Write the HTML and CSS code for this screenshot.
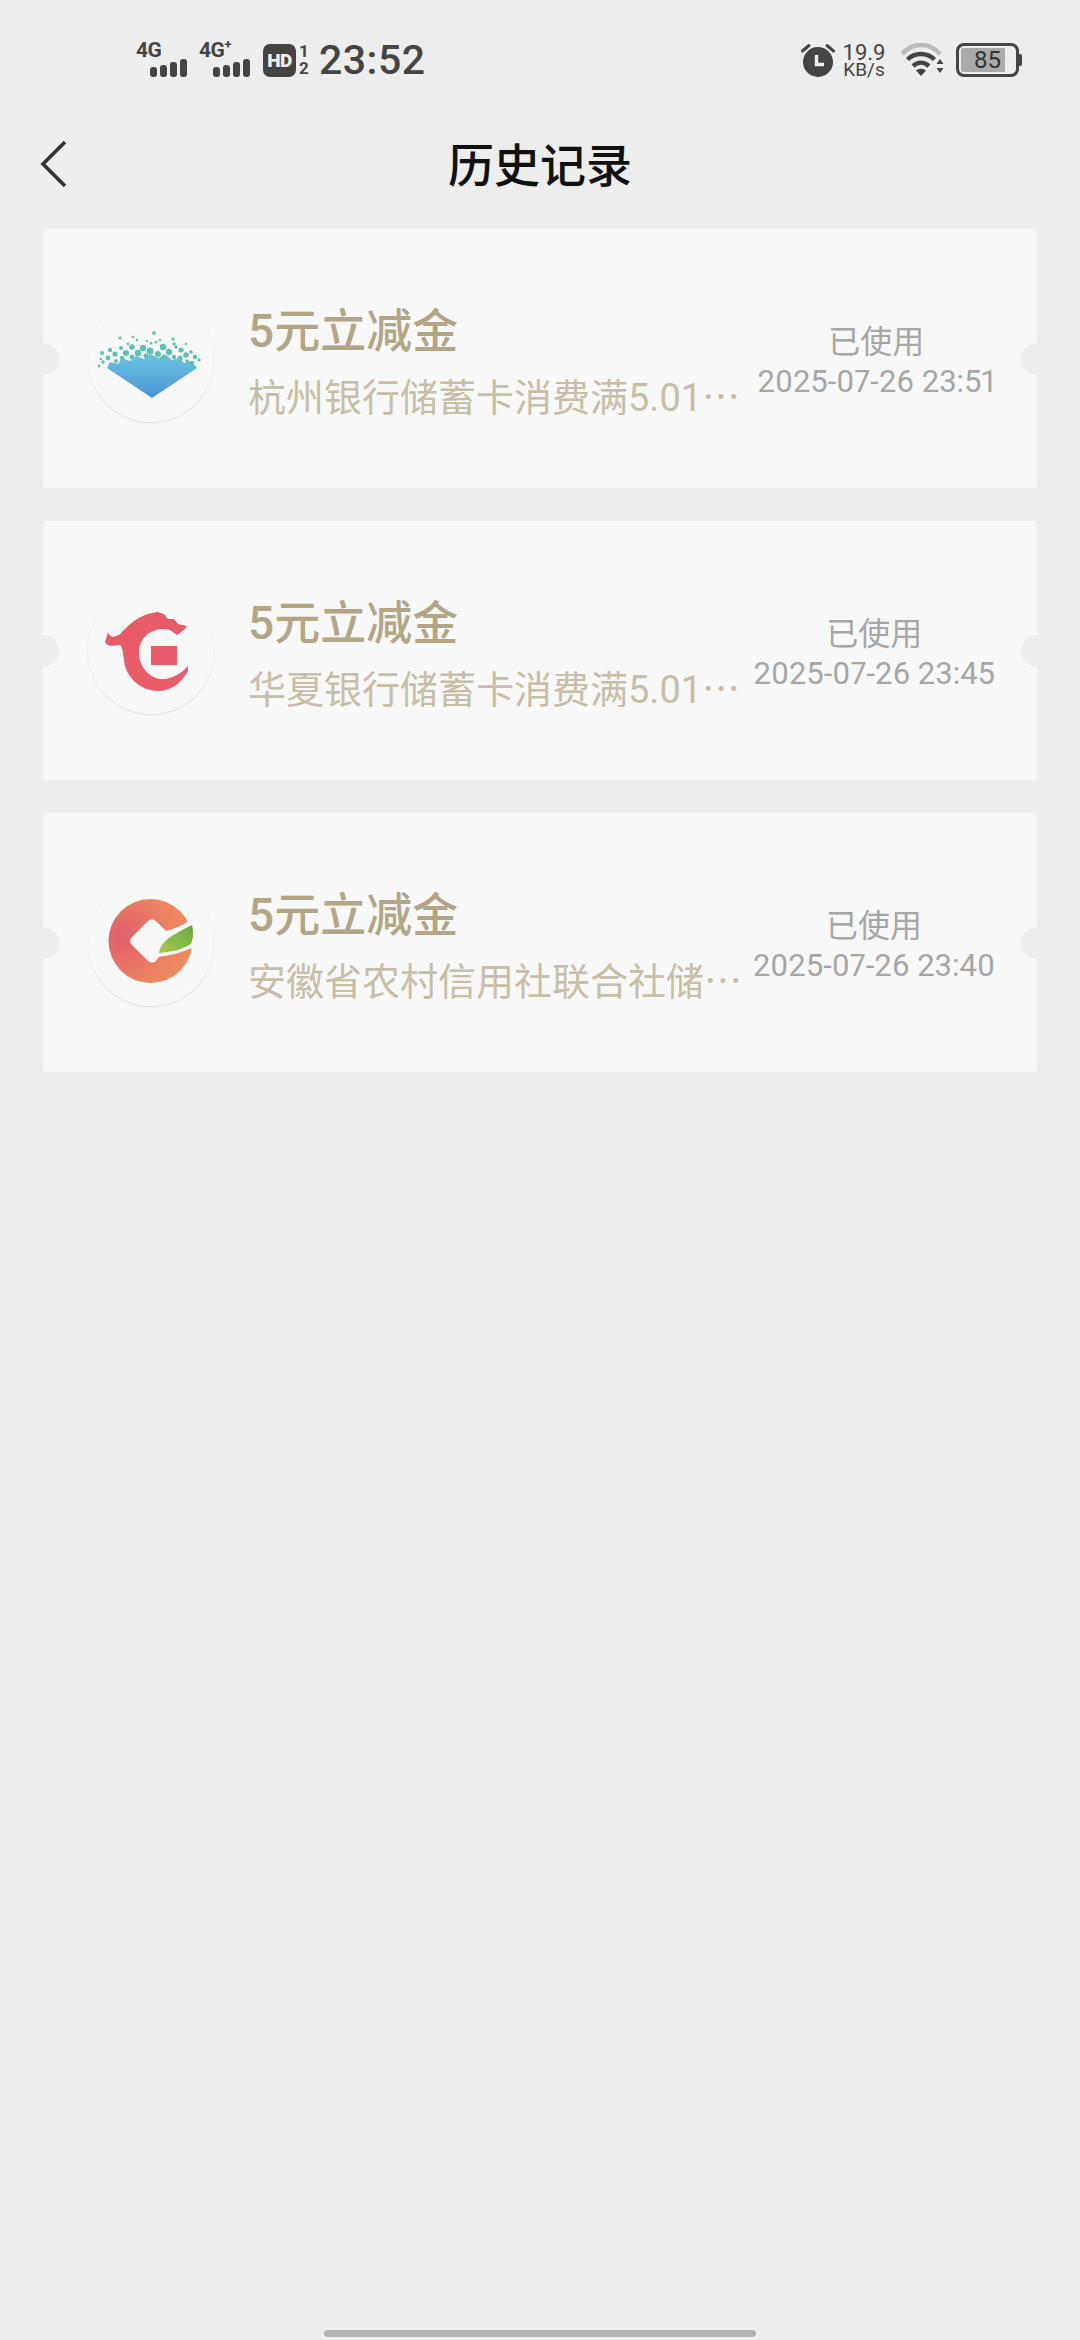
FILE: index.html
```html
<!DOCTYPE html>
<html lang="zh-CN">
<head>
    <meta charset="UTF-8">
    <meta name="viewport" content="width=device-width, initial-scale=1.0">
    <title>历史记录</title>
    <link rel="stylesheet" href="styles.css">
</head>
<body>
    <!-- Status bar -->
    <div class="status-bar">
        <div class="signal">
            <span class="net">4G</span>
            <div class="bars"><i class="b1"></i><i class="b2"></i><i class="b3"></i><i class="b4"></i></div>
        </div>
        <div class="signal">
            <span class="net">4G<sup>+</sup></span>
            <div class="bars"><i class="b1"></i><i class="b2"></i><i class="b3"></i><i class="b4"></i></div>
        </div>
        <span class="hd">HD</span>
        <div class="sim"><span>1</span><span>2</span></div>
        <span class="time">23:52</span>

        <div class="status-right">
            <svg class="alarm" width="34" height="34" viewBox="0 0 34 34">
                <circle cx="17" cy="19" r="15" fill="#444"/>
                <path d="M1.5 8 L8 2.5 M32.5 8 L26 2.5" stroke="#444" stroke-width="3" stroke-linecap="round"/>
                <path d="M15.5 12 V21.5 H23" fill="none" stroke="#eee" stroke-width="3.4"/>
            </svg>
            <div class="speed"><span class="speed-num">19.9</span><span class="speed-unit">KB/s</span></div>
            <svg class="wifi" width="44" height="34" viewBox="0 0 44 34">
                <path d="M1 11 C12 -1 28 -1 39 11" fill="none" stroke="#bbb" stroke-width="4.5"/>
                <path d="M6.5 16.5 C14 9 26 9 33.5 16.5" fill="none" stroke="#444" stroke-width="4.5"/>
                <path d="M12 23 C17 18.5 23 18.5 28 23" fill="none" stroke="#444" stroke-width="4.5"/>
                <path d="M15 27.5 C18 25 22 25 25 27.5 L20 33 Z" fill="#444"/>
                <path d="M35.5 21 L39 16 L42.5 21 Z M35.5 25 H42.5 L39 30 Z" fill="#444"/>
            </svg>
            <div class="battery">
                <div class="battery-level">85</div>
            </div>
            <span class="battery-nub"></span>
        </div>
    </div>

    <!-- Title row -->
    <div class="nav">
        <svg class="back" width="30" height="50" viewBox="0 0 30 50">
            <path d="M26 3 L4 25 L26 47" fill="none" stroke="#333" stroke-width="3.6"/>
        </svg>
        <h1>历史记录</h1>
    </div>

    <div class="list">
        <div class="ticket">
            <div class="logo">
                <svg width="126" height="126" viewBox="0 -2 126 126">
                    <defs>
                        <linearGradient id="hzBlue" x1="0" y1="0" x2="0" y2="1">
                            <stop offset="0" stop-color="#6cc4e6"/>
                            <stop offset="1" stop-color="#4a94d2"/>
                        </linearGradient>
                    </defs>
                    <path d="M19 70 L22 64 L30 66 L34 60 L42 63 L48 58 L56 61 L62 56 L70 60 L78 57 L84 62 L92 60 L96 65 L103 63 L109 70 L64 100 Z" fill="url(#hzBlue)"/>
                    <g fill="#5cc0b4">
                        <circle cx="14" cy="55" r="2"/><circle cx="22" cy="52" r="2.2"/><circle cx="27" cy="56" r="2.6"/>
                        <circle cx="33" cy="50" r="2"/><circle cx="38" cy="55" r="3"/><circle cx="44" cy="49" r="2.8"/>
                        <circle cx="50" cy="55" r="3.2"/><circle cx="55" cy="50" r="3.2"/><circle cx="62" cy="53" r="3.4"/>
                        <circle cx="70" cy="56" r="3"/><circle cx="75" cy="49" r="3.2"/><circle cx="81" cy="54" r="3.2"/>
                        <circle cx="88" cy="49" r="1.8"/><circle cx="93" cy="52" r="2.6"/><circle cx="98" cy="57" r="2.8"/>
                        <circle cx="103" cy="54" r="1.8"/><circle cx="107" cy="59" r="2.2"/><circle cx="111" cy="62" r="1.7"/>
                        <circle cx="104" cy="65" r="2.2"/><circle cx="99" cy="63" r="1.8"/><circle cx="92" cy="60" r="2.6"/>
                        <circle cx="86" cy="59" r="2.2"/><circle cx="76" cy="59" r="2.6"/><circle cx="66" cy="60" r="1.8"/>
                        <circle cx="58" cy="58" r="2.4"/><circle cx="44" cy="59" r="2.4"/><circle cx="34" cy="60" r="2.2"/>
                        <circle cx="28" cy="63" r="2"/><circle cx="20" cy="60" r="2.4"/><circle cx="15" cy="64" r="1.8"/>
                        <circle cx="11" cy="68" r="1.4"/><circle cx="13" cy="61" r="1.3"/>
                    </g>
                    <g fill="#6cc8ac">
                        <circle cx="32" cy="40" r="1.8"/><circle cx="45" cy="39" r="1.3"/><circle cx="49" cy="42" r="1.3"/>
                        <circle cx="59" cy="43" r="1.3"/><circle cx="63" cy="45" r="1.5"/><circle cx="68" cy="44" r="1.5"/>
                        <circle cx="72" cy="42" r="1.3"/><circle cx="66" cy="35" r="2"/><circle cx="85" cy="41" r="1.8"/>
                        <circle cx="40" cy="46" r="1.4"/><circle cx="98" cy="46" r="1.3"/><circle cx="86" cy="46" r="1.8"/>
                    </g>
                </svg>
            </div>
            <div class="info">
                <div class="name">5元立减金</div>
                <div class="desc">杭州银行储蓄卡消费满5.01⋯</div>
            </div>
            <div class="state">
                <div class="used">已使用</div>
                <div class="date">2025-07-26 23:51</div>
            </div>
        </div>

        <div class="ticket">
            <div class="logo">
                <svg width="126" height="126" viewBox="0 0 126 126">
                    <path d="M20 44 C22 50 26 50 32 46 C40 38 50 26 70 24 L76 26 L80 31 L86 31 L90 36 L99 38 L96 42 L89 47 L82 42 C66 38 52 48 51 63 C50 78 62 92 76 91 C86 90 94 85 100 78 L100 83 C93 96 82 103 70 103 C52 103 37 88 36 72 C35 66 35 60 32 57 C27 57 20 60 17 54 Z" fill="#e85c6a"/>
                    <rect x="63" y="58" width="26" height="19" fill="#e85c6a"/>
                </svg>
            </div>
            <div class="info">
                <div class="name">5元立减金</div>
                <div class="desc">华夏银行储蓄卡消费满5.01⋯</div>
            </div>
            <div class="state">
                <div class="used">已使用</div>
                <div class="date">2025-07-26 23:45</div>
            </div>
        </div>

        <div class="ticket">
            <div class="logo">
                <svg width="126" height="126" viewBox="0 0 126 126">
                    <defs>
                        <radialGradient id="ahOrange" cx="0.15" cy="0.45" r="0.9">
                            <stop offset="0" stop-color="#e05f6c"/>
                            <stop offset="0.7" stop-color="#ec8560"/>
                            <stop offset="1" stop-color="#ee8c5c"/>
                        </radialGradient>
                        <linearGradient id="ahLeaf" x1="0" y1="1" x2="1" y2="0">
                            <stop offset="0" stop-color="#a4c94c"/>
                            <stop offset="1" stop-color="#6aa842"/>
                        </linearGradient>
                    </defs>
                    <circle cx="62.5" cy="61" r="42" fill="url(#ahOrange)"/>
                    <path d="M60 41 Q64 37.5 68 41 L82 55 L76 70 L68 81 Q64 84.5 60 81 L44 65 Q40 61 44 57 Z" fill="#f8f8f8"/>
                    <path d="M73 52 C84 50 94 46 106 38 L108 66 C96 72 82 76 67 77 Z" fill="#f8f8f8"/>
                    <path d="M71 73 C73 60 88 53 104 45 C106 52 105 60 103 64 C94 70 82 72 71 73 Z" fill="url(#ahLeaf)"/>
                </svg>
            </div>
            <div class="info">
                <div class="name">5元立减金</div>
                <div class="desc">安徽省农村信用社联合社储⋯</div>
            </div>
            <div class="state">
                <div class="used">已使用</div>
                <div class="date">2025-07-26 23:40</div>
            </div>
        </div>
    </div>

    <div class="home-bar"></div>
</body>
</html>
```

FILE: styles.css
```css
body {
    font-family: Roboto, "Noto Sans CJK SC", sans-serif;
    background-color: #ededed;
    margin: 0;
    min-height: 100vh;
    display: flex;
    flex-direction: column;
    color: #444;
}

/* Status bar */
.status-bar {
    display: flex;
    align-items: center;
    height: 36px;
    padding: 42px 58px 38px 136px;
}

.signal {
    display: flex;
    width: 54px;
    height: 34px;
    margin-right: 9px;
    flex-direction: column;
}

.net {
    font-size: 21px;
    line-height: 15px;
    font-weight: 700;
    letter-spacing: -0.5px;
}

.net sup {
    font-size: 13px;
    line-height: 0;
}

.bars {
    display: flex;
    align-items: flex-end;
    gap: 3px;
    margin-left: 14px;
    height: 19px;
}

.bars i {
    display: block;
    width: 7px;
    background-color: #444;
    border-radius: 3px;
}

.b1 { height: 10px; }
.b2 { height: 12px; }
.b3 { height: 15px; }
.b4 { height: 18px; }

.hd {
    width: 33px;
    height: 33px;
    margin-left: 1px;
    background-color: #444;
    border-radius: 7px;
    color: #eee;
    font-size: 19px;
    line-height: 33px;
    font-weight: 900;
    text-align: center;
    letter-spacing: -0.5px;
}

.sim {
    display: flex;
    flex-direction: column;
    width: 12px;
    margin-left: 2px;
    font-size: 17px;
    line-height: 17px;
    font-weight: 700;
    text-align: center;
}

.time {
    margin-left: 9px;
    font-size: 41px;
    line-height: 36px;
    font-weight: 500;
    letter-spacing: 0.5px;
}

.status-right {
    display: flex;
    align-items: center;
    margin-left: auto;
}

.speed {
    display: flex;
    flex-direction: column;
    align-items: center;
    width: 46px;
    margin-left: 6px;
}

.speed-num {
    font-size: 22px;
    line-height: 19px;
}

.speed-unit {
    font-size: 19px;
    line-height: 16px;
}

.wifi {
    margin-left: 14px;
}

.battery {
    box-sizing: border-box;
    width: 63px;
    height: 34px;
    margin-left: 11px;
    border: 3px solid #444;
    border-radius: 8px;
    padding: 2px;
}

.battery-level {
    width: 44px;
    height: 24px;
    background-color: #aaaaaa;
    border-radius: 3px 0 0 3px;
    font-size: 24px;
    line-height: 24px;
    color: #333;
    text-align: right;
    padding-right: 4px;
    box-sizing: border-box;
}

.battery-nub {
    width: 3px;
    height: 12px;
    background-color: #444;
    border-radius: 0 2px 2px 0;
}

/* Title row */
.nav {
    display: flex;
    align-items: center;
    justify-content: center;
    position: relative;
    height: 92px;
    padding-bottom: 21px;
}

.nav h1 {
    margin: 0;
    font-size: 46px;
    font-weight: 500;
    color: #111;
}

.back {
    position: absolute;
    left: 39px;
    top: 23px;
}

/* Coupons */
.list {
    display: flex;
    flex-direction: column;
    gap: 33px;
    padding: 0 43px;
}

.ticket {
    position: relative;
    overflow: hidden;
    display: flex;
    align-items: center;
    height: 259px;
    padding: 0 42px 0 45px;
    background-color: #f8f8f8;
    border-radius: 4px;
}

.ticket::before,
.ticket::after {
    content: "";
    position: absolute;
    top: 114px;
    width: 32px;
    height: 32px;
    background-color: #ededed;
    border-radius: 50%;
}

.ticket::before {
    left: -16px;
}

.ticket::after {
    right: -16px;
}

.logo {
    flex: none;
    width: 126px;
    height: 126px;
    border-radius: 50%;
    background-color: #f8f8f8;
    box-shadow: 0 1px 2px rgba(0, 0, 0, 0.1);
}

.logo svg {
    display: block;
    filter: blur(0.4px);
}

.info {
    flex: 1;
    min-width: 0;
    margin-left: 34px;
    padding-top: 7px;
}

.name {
    font-size: 46px;
    line-height: 60px;
    font-weight: 500;
    color: #b3a586;
}

.desc {
    margin-top: 12px;
    font-size: 38px;
    line-height: 50px;
    color: #c8bea6;
    white-space: nowrap;
}

.state {
    flex: none;
    padding-top: 6px;
    text-align: center;
    color: #a6a6a6;
}

.used {
    font-size: 32px;
    line-height: 38px;
}

.date {
    margin-top: 2px;
    font-size: 31px;
    line-height: 38px;
    font-variant-numeric: proportional-nums;
}

.home-bar {
    width: 432px;
    height: 7px;
    margin: auto auto 3px;
    background-color: #b2b2b2;
    border-radius: 4px;
}
```
